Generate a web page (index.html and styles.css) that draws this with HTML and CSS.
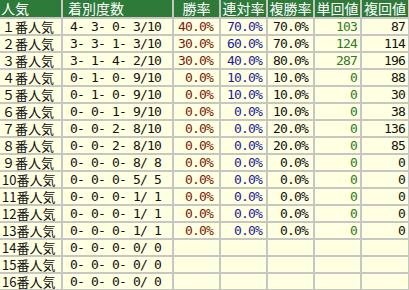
FILE: index.html
```html
<!DOCTYPE html>
<html lang="ja">
<head>
<meta charset="utf-8">
<link rel="stylesheet" href="styles.css">
</head>
<body>
<table class="stats">
  <colgroup>
    <col class="c-pop"><col class="c-rec"><col class="c-n"><col class="c-n"><col class="c-n"><col class="c-n"><col class="c-last">
  </colgroup>
  <thead>
    <tr>
      <th class="h-pop">人気</th>
      <th class="h-rec">着別度数</th>
      <th>勝率</th>
      <th>連対率</th>
      <th>複勝率</th>
      <th>単回値</th>
      <th>複回値</th>
    </tr>
  </thead>
  <tbody>
    <tr><td class="pop">１番人気</td><td class="rec">4- 3- 0- 3/10</td><td class="num win">40.0%</td><td class="num ren">70.0%</td><td class="num fuku">70.0%</td><td class="num tan">103</td><td class="num fk">87</td></tr>
    <tr><td class="pop">２番人気</td><td class="rec">3- 3- 1- 3/10</td><td class="num win">30.0%</td><td class="num ren">60.0%</td><td class="num fuku">70.0%</td><td class="num tan">124</td><td class="num fk">114</td></tr>
    <tr><td class="pop">３番人気</td><td class="rec">3- 1- 4- 2/10</td><td class="num win">30.0%</td><td class="num ren">40.0%</td><td class="num fuku">80.0%</td><td class="num tan">287</td><td class="num fk">196</td></tr>
    <tr><td class="pop">４番人気</td><td class="rec">0- 1- 0- 9/10</td><td class="num win">0.0%</td><td class="num ren">10.0%</td><td class="num fuku">10.0%</td><td class="num tan">0</td><td class="num fk">88</td></tr>
    <tr><td class="pop">５番人気</td><td class="rec">0- 1- 0- 9/10</td><td class="num win">0.0%</td><td class="num ren">10.0%</td><td class="num fuku">10.0%</td><td class="num tan">0</td><td class="num fk">30</td></tr>
    <tr><td class="pop">６番人気</td><td class="rec">0- 0- 1- 9/10</td><td class="num win">0.0%</td><td class="num ren">0.0%</td><td class="num fuku">10.0%</td><td class="num tan">0</td><td class="num fk">38</td></tr>
    <tr><td class="pop">７番人気</td><td class="rec">0- 0- 2- 8/10</td><td class="num win">0.0%</td><td class="num ren">0.0%</td><td class="num fuku">20.0%</td><td class="num tan">0</td><td class="num fk">136</td></tr>
    <tr><td class="pop">８番人気</td><td class="rec">0- 0- 2- 8/10</td><td class="num win">0.0%</td><td class="num ren">0.0%</td><td class="num fuku">20.0%</td><td class="num tan">0</td><td class="num fk">85</td></tr>
    <tr><td class="pop">９番人気</td><td class="rec">0- 0- 0- 8/ 8</td><td class="num win">0.0%</td><td class="num ren">0.0%</td><td class="num fuku">0.0%</td><td class="num tan">0</td><td class="num fk">0</td></tr>
    <tr><td class="pop half">10番人気</td><td class="rec">0- 0- 0- 5/ 5</td><td class="num win">0.0%</td><td class="num ren">0.0%</td><td class="num fuku">0.0%</td><td class="num tan">0</td><td class="num fk">0</td></tr>
    <tr><td class="pop half">11番人気</td><td class="rec">0- 0- 0- 1/ 1</td><td class="num win">0.0%</td><td class="num ren">0.0%</td><td class="num fuku">0.0%</td><td class="num tan">0</td><td class="num fk">0</td></tr>
    <tr><td class="pop half">12番人気</td><td class="rec">0- 0- 0- 1/ 1</td><td class="num win">0.0%</td><td class="num ren">0.0%</td><td class="num fuku">0.0%</td><td class="num tan">0</td><td class="num fk">0</td></tr>
    <tr><td class="pop half">13番人気</td><td class="rec">0- 0- 0- 1/ 1</td><td class="num win">0.0%</td><td class="num ren">0.0%</td><td class="num fuku">0.0%</td><td class="num tan">0</td><td class="num fk">0</td></tr>
    <tr><td class="pop half">14番人気</td><td class="rec">0- 0- 0- 0/ 0</td><td class="num"></td><td class="num"></td><td class="num"></td><td class="num"></td><td class="num"></td></tr>
    <tr><td class="pop half">15番人気</td><td class="rec">0- 0- 0- 0/ 0</td><td class="num"></td><td class="num"></td><td class="num"></td><td class="num"></td><td class="num"></td></tr>
    <tr><td class="pop half">16番人気</td><td class="rec">0- 0- 0- 0/ 0</td><td class="num"></td><td class="num"></td><td class="num"></td><td class="num"></td><td class="num"></td></tr>
  </tbody>
</table>
</body>
</html>
```

FILE: styles.css
```css
html, body {
  margin: 0;
  padding: 0;
  background: #ffffe2;
}

body {
  height: 290px;
  overflow: hidden;
}

.stats {
  table-layout: fixed;
  width: 412px;
  margin: -2px 0 0 -2px;
  border-collapse: separate;
  border-spacing: 2px;
  background: #c6c6c2;
  font-family: "Noto Sans CJK JP", sans-serif;
}

.c-pop { width: 61px; }
.c-rec { width: 109px; }
.c-n { width: 45px; }
.c-last { width: 46px; }

.stats th {
  height: 17px;
  padding: 0;
  background: #2d7a39;
  color: #ffffff;
  font-size: 14px;
  font-weight: normal;
  line-height: 17px;
  text-align: center;
  white-space: nowrap;
}

.stats th.h-pop {
  text-align: left;
  padding-left: 1px;
}

.stats th.h-rec {
  text-align: left;
  padding-left: 5px;
}

.stats td {
  height: 15px;
  padding: 0;
  background: #ffffe2;
  color: #111111;
  line-height: 15px;
  white-space: pre;
}

.pop {
  font-family: "Noto Sans CJK JP", sans-serif;
  font-size: 13px;
  padding-left: 2px !important;
  color: #222222;
}

.pop.half {
  padding-left: 2px !important;
}

.rec, .num {
  font-family: "DejaVu Sans Mono", "Liberation Mono", monospace;
  font-size: 13px;
  letter-spacing: -0.83px;
}

.rec {
  padding-left: 7px !important;
}

.num {
  text-align: right;
  padding-right: 4px !important;
}

.win {
  color: #7a1a08 !important;
  padding-right: 6px !important;
}

.ren {
  color: #1c1c9a !important;
}

.fuku {
  padding-right: 5px !important;
}

.tan {
  color: #2f7a22 !important;
  padding-right: 3px !important;
}

.fk {
  padding-right: 3px !important;
}
```
